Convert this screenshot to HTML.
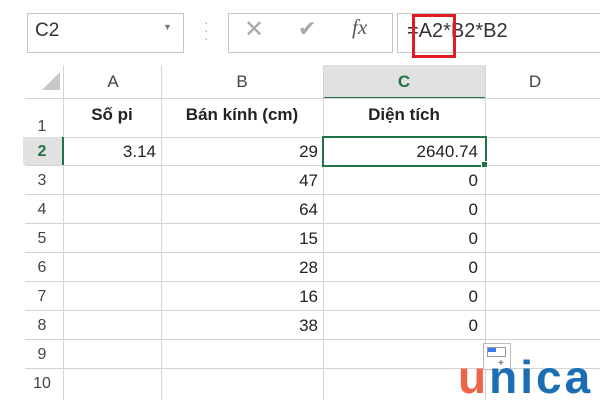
<!DOCTYPE html><html><head><style>
body{margin:0;width:600px;height:400px;overflow:hidden;background:#fff;font-family:"Liberation Sans",sans-serif;position:relative}
.a{position:absolute}
.hl{position:absolute;height:1px;background:#d4d4d4}
.vl{position:absolute;width:1px;background:#d4d4d4}
.t{position:absolute;font-size:16px;color:#222;line-height:29px}
.r{text-align:right}
.rh{position:absolute;left:23px;width:38px;text-align:center;font-size:16px;color:#444;line-height:29px}
</style></head><body>
<div class="a" style="left:27px;top:13px;width:155px;height:38px;border:1px solid #c6c6c6"></div>
<div class="a" style="left:35px;top:20px;font-size:19px;color:#333">C2</div>
<div class="a" style="left:163px;top:22px;font-size:9px;color:#777">▼</div>
<div class="a" style="left:204px;top:18px;font-size:14px;color:#aaa;line-height:8px">·<br>·<br>·</div>
<div class="a" style="left:228px;top:13px;width:163px;height:38px;border:1px solid #c6c6c6"></div>
<div class="a" style="left:244px;top:15px;font-size:24px;color:#aaa">✕</div>
<div class="a" style="left:298px;top:16px;font-size:22px;color:#aaa">✔</div>
<div class="a" style="left:352px;top:15px;font-size:21px;color:#555;font-family:'Liberation Serif',serif;font-style:italic">fx</div>
<div class="a" style="left:397px;top:13px;width:210px;height:38px;border:1px solid #c6c6c6;border-right:none"></div>
<div class="a" style="left:407px;top:20px;font-size:20px;color:#333">=A2*B2*B2</div>
<div class="a" style="left:412px;top:14px;width:38px;height:38px;border:3px solid #e01b24"></div>
<div class="a" style="left:323px;top:65px;width:162px;height:32px;background:#e1e1e1;border-bottom:2px solid #217346"></div>
<div class="a" style="left:42px;top:72px;width:0;height:0;border-left:18px solid transparent;border-bottom:18px solid #c8c8c8"></div>
<div class="t" style="left:65px;top:67px;width:96px;text-align:center;color:#444;font-size:17px">A</div>
<div class="t" style="left:161px;top:67px;width:162px;text-align:center;color:#444;font-size:17px">B</div>
<div class="t" style="left:323px;top:67px;width:162px;text-align:center;color:#217346;font-weight:bold;font-size:17px">C</div>
<div class="t" style="left:485px;top:67px;width:100px;text-align:center;color:#444;font-size:17px">D</div>
<div class="hl" style="left:25px;top:98px;width:575px"></div>
<div class="vl" style="left:63px;top:65px;height:335px"></div>
<div class="vl" style="left:161px;top:65px;height:335px"></div>
<div class="vl" style="left:323px;top:65px;height:335px"></div>
<div class="vl" style="left:485px;top:65px;height:335px"></div>
<div class="hl" style="left:25px;top:137px;width:575px"></div>
<div class="hl" style="left:25px;top:165px;width:575px"></div>
<div class="hl" style="left:25px;top:194px;width:575px"></div>
<div class="hl" style="left:25px;top:223px;width:575px"></div>
<div class="hl" style="left:25px;top:252px;width:575px"></div>
<div class="hl" style="left:25px;top:281px;width:575px"></div>
<div class="hl" style="left:25px;top:310px;width:575px"></div>
<div class="hl" style="left:25px;top:339px;width:575px"></div>
<div class="hl" style="left:25px;top:368px;width:575px"></div>
<div class="a" style="left:23px;top:137px;width:39px;height:28px;background:#e1e1e1;border-right:2px solid #217346"></div>
<div class="rh" style="top:112px">1</div>
<div class="rh" style="top:137px;color:#217346;font-weight:bold">2</div>
<div class="rh" style="top:166px">3</div>
<div class="rh" style="top:195px">4</div>
<div class="rh" style="top:224px">5</div>
<div class="rh" style="top:253px">6</div>
<div class="rh" style="top:282px">7</div>
<div class="rh" style="top:311px">8</div>
<div class="rh" style="top:340px">9</div>
<div class="rh" style="top:369px">10</div>
<div class="t" style="left:63px;top:100px;width:98px;text-align:center;font-weight:bold;font-size:17px">Số pi</div>
<div class="t" style="left:161px;top:100px;width:162px;text-align:center;font-weight:bold;font-size:17px">Bán kính (cm)</div>
<div class="t" style="left:323px;top:100px;width:162px;text-align:center;font-weight:bold;font-size:17px">Diện tích</div>
<div class="t r" style="left:63px;top:137px;width:93px;font-size:17px">3.14</div>
<div class="t r" style="left:161px;top:137px;width:157px;font-size:17px">29<br>47<br>64<br>15<br>28<br>16<br>38</div>
<div class="a" style="left:322px;top:136px;width:161px;height:27px;border:2px solid #217346"></div>
<div class="a" style="left:481px;top:161px;width:5px;height:5px;background:#217346;border:1px solid #fff"></div>
<div class="t r" style="left:323px;top:137px;width:155px;font-size:17px">2640.74<br>0<br>0<br>0<br>0<br>0<br>0</div>
<div class="a" style="left:483px;top:343px;width:26px;height:25px;border:1px solid #bbb;background:#fff"></div>
<div class="a" style="left:487px;top:347px;width:9px;height:5px;background:#3b7dea"></div>
<div class="a" style="left:487px;top:347px;width:19px;height:10px;border:1px solid #999;box-sizing:border-box"></div>
<div class="a" style="left:498px;top:358px;font-size:10px;color:#777;font-weight:bold">+</div>
<div class="a" style="left:458px;top:352px;font-size:46px;font-weight:bold;letter-spacing:3px;line-height:50px"><span style="color:#f0654a">u</span><span style="color:#1c6eb4">nica</span></div>
</body></html>
